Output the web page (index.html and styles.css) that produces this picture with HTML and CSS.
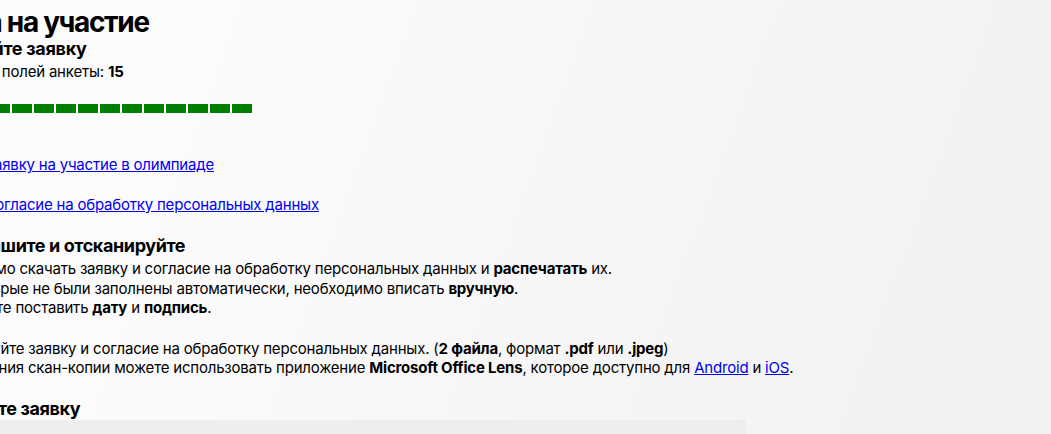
FILE: index.html
```html
<!DOCTYPE html>
<html lang="ru">
<head>
<meta charset="utf-8">
<title>Заявка на участие</title>
<link rel="stylesheet" href="styles.css">
</head>
<body>
<main class="page">
  <h1 class="title">Заявка на участие</h1>
  <h2 class="subtitle">Заполняйте заявку</h2>
  <p class="count">Заполнено полей анкеты: <b>15</b></p>
  <div class="progress">
    <span class="seg"></span><span class="seg"></span><span class="seg"></span><span class="seg"></span><span class="seg"></span>
    <span class="seg"></span><span class="seg"></span><span class="seg"></span><span class="seg"></span><span class="seg"></span>
    <span class="seg"></span><span class="seg"></span><span class="seg"></span><span class="seg"></span><span class="seg"></span>
  </div>
  <div class="downloads">
    <p class="dl"><a href="#">Скачать заявку на участие в олимпиаде</a></p>
    <p class="dl"><a href="#">Скачать согласие на обработку персональных данных</a></p>
  </div>
  <h2 class="step">2. Подпишите и отсканируйте</h2>
  <p class="text">Необходимо скачать заявку и согласие на обработку персональных данных и <b>распечатать</b> их.<br>
  Поля, которые не были заполнены автоматически, необходимо вписать <b>вручную</b>.<br>
  Не забудьте поставить <b>дату</b> и <b>подпись</b>.</p>
  <p class="text gap">Отсканируйте заявку и согласие на обработку персональных данных. (<b>2 файла</b>, формат <b>.pdf</b> или <b>.jpeg</b>)<br>
  Для создания скан-копии можете использовать приложение <b>Microsoft Office Lens</b>, которое доступно для <a href="#">Android</a> и <a href="#">iOS</a>.</p>
  <h2 class="step">Отправьте заявку</h2>
  <div class="upload"></div>
</main>
</body>
</html>
```
FILE: styles.css
```css
html, body {
  margin: 0;
  height: 100%;
}
body {
  font-family: Inter, "Noto Sans", sans-serif;
  color: #000;
  background: linear-gradient(110deg, #fbfbfb 20%, #f1f0f2 100%);
  overflow: hidden;
}
.page {
  margin-left: -76px;
  padding-top: 6px;
}
.title {
  margin: 0 0 0 -14px;
  font-size: 28px;
  line-height: 32px;
  font-weight: 700;
  letter-spacing: -1.3px;
}
.subtitle, .step {
  margin: 0;
  font-size: 18px;
  line-height: 22px;
  font-weight: 700;
  letter-spacing: -0.4px;
}
.subtitle {
  margin-left: -6px;
  letter-spacing: -0.3px;
}
.count {
  margin: 2px 0 0 -4px;
  font-size: 15px;
  line-height: 20px;
  letter-spacing: -0.2px;
}
.progress {
  display: flex;
  gap: 2px;
  margin-top: 22px;
}
.seg {
  width: 20px;
  height: 9px;
  background: #008000;
}
.downloads {
  display: flex;
  flex-direction: column;
  gap: 20px;
  margin-top: 42px;
}
.dl {
  margin: 0;
  font-size: 15px;
  line-height: 20px;
  letter-spacing: -0.2px;
}
a { color: #0000ee; }
.step { margin-top: 20px; }
.text {
  margin: 2px 0 0;
  font-size: 15px;
  line-height: 19.5px;
  letter-spacing: -0.2px;
}
.text.gap { margin-top: 21px; }
.upload {
  width: 822px;
  height: 60px;
  background: #eeeeef;
}
```
